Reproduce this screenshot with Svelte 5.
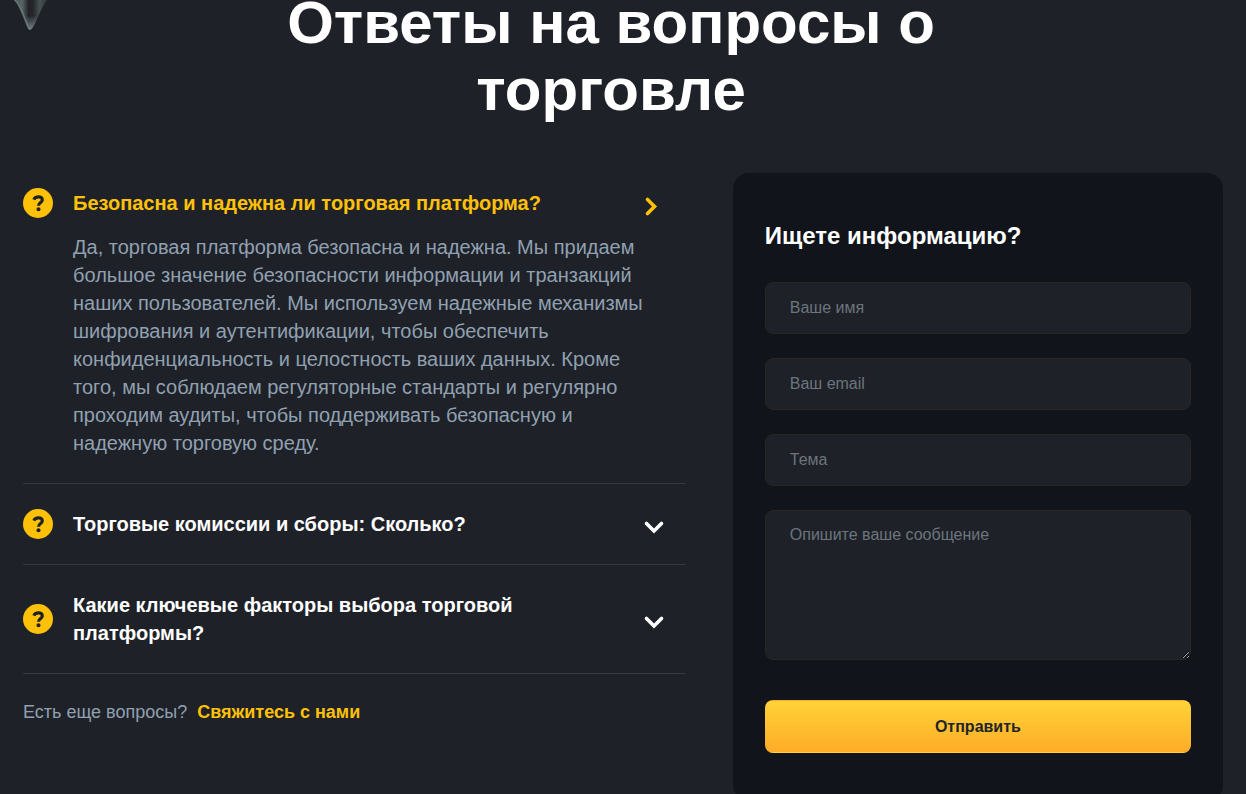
<script>
  let open = $state(0);

  const questions = [
    {
      title: 'Безопасна и надежна ли торговая платформа?',
      text: 'Да, торговая платформа безопасна и надежна. Мы придаем большое значение безопасности информации и транзакций наших пользователей. Мы используем надежные механизмы шифрования и аутентификации, чтобы обеспечить конфиденциальность и целостность ваших данных. Кроме того, мы соблюдаем регуляторные стандарты и регулярно проходим аудиты, чтобы поддерживать безопасную и надежную торговую среду.'
    },
    { title: 'Торговые комиссии и сборы: Сколько?' },
    { title: 'Какие ключевые факторы выбора торговой платформы?' }
  ];

  const toggle = (i) => (open = open === i ? -1 : i);
</script>

<section class="page">
  <svg class="ornament" viewBox="0 0 40 32" aria-hidden="true">
    <defs>
      <linearGradient id="metal" x1="0" x2="1">
        <stop offset="0" stop-color="#4d5b5c" />
        <stop offset="0.28" stop-color="#566263" />
        <stop offset="0.45" stop-color="#202327" />
        <stop offset="0.58" stop-color="#25292c" />
        <stop offset="0.75" stop-color="#465152" />
        <stop offset="1" stop-color="#2a3134" />
      </linearGradient>
      <linearGradient id="tip" x1="0" x2="0" y1="0" y2="1">
        <stop offset="0.55" stop-color="#829092" stop-opacity="0" />
        <stop offset="1" stop-color="#829092" stop-opacity="0.9" />
      </linearGradient>
      <filter id="soft"><feGaussianBlur stdDeviation="0.6" /></filter>
    </defs>
    <g filter="url(#soft)">
      <path d="M3 -2C10 4 13 15 17 24Q19 30 21 30Q24 29 28 19C32 10 35 3 40 -2Z" fill="url(#metal)" />
      <path d="M3 -2C10 4 13 15 17 24Q19 30 21 30Q24 29 28 19C32 10 35 3 40 -2Z" fill="url(#tip)" />
      <path d="M5 -1C12 5 15 16 19 26" fill="none" stroke="#7b898a" stroke-width="1.2" opacity="0.6" />
    </g>
  </svg>

  <h1>Ответы на вопросы о торговле</h1>

  <div class="columns">
    <div class="faq">
      {#each questions as q, i}
        <article class="item" class:active={open === i}>
          <button class="question" type="button" aria-expanded={open === i} onclick={() => toggle(i)}>
            <svg class="mark" viewBox="0 0 30 30" aria-hidden="true">
              <circle cx="15" cy="15" r="15" fill="#ffc107" />
              <path d="M10.800 11.700C11.600 9.800 13.200 8.900 15.300 8.900C17.700 8.900 19.300 10.100 19.300 11.900C19.300 14.500 15.500 14.400 15.500 17.700" fill="none" stroke="#1e2128" stroke-width="3.100" />
              <circle cx="15.500" cy="21.300" r="2" fill="#1e2128" />
            </svg>
            <span class="title">{q.title}</span>
            <svg class="arrow" viewBox="0 0 24 24" aria-hidden="true">
              {#if open === i}
                <path d="M6.500 8.500L13.500 15.500L6.500 22.500" />
              {:else}
                <path d="M5.500 11.500L13 19L20.500 11.500" />
              {/if}
            </svg>
          </button>
          {#if open === i && q.text}
            <p class="answer">{q.text}</p>
          {/if}
        </article>
      {/each}
      <p class="more">Есть еще вопросы? <a href="#contact">Свяжитесь с нами</a></p>
    </div>

    <form class="card" id="contact" onsubmit={(e) => e.preventDefault()}>
      <h2>Ищете информацию?</h2>
      <input type="text" name="name" placeholder="Ваше имя" aria-label="Ваше имя" />
      <input type="email" name="email" placeholder="Ваш email" aria-label="Ваш email" />
      <input type="text" name="subject" placeholder="Тема" aria-label="Тема" />
      <textarea name="message" placeholder="Опишите ваше сообщение" aria-label="Опишите ваше сообщение"></textarea>
      <button class="send" type="submit">Отправить</button>
    </form>
  </div>
</section>

<style>
  :global(body) {
    background: #1e2128;
  }

  .page {
    position: relative;
    display: flow-root;
    box-sizing: border-box;
    max-width: 1246px;
    margin: 0 auto;
    padding: 0 23px;
    color: #fff;
    font-family: Arial, "Liberation Sans", sans-serif;
  }

  .ornament {
    position: absolute;
    top: 0;
    left: 9px;
    width: 40px;
    height: 32px;
  }

  h1 {
    max-width: 720px;
    margin: -11px auto 50px;
    padding-right: 24px;
    font-size: 60px;
    line-height: 67px;
    text-align: center;
  }

  .columns {
    display: grid;
    grid-template-columns: minmax(0, 1.35fr) minmax(0, 1fr);
    gap: 48px;
    align-items: start;
  }

  .item {
    padding: 26px 20px 26px 0;
    border-bottom: 1px solid #363941;
  }

  .item:first-child {
    padding-top: 16px;
  }

  .question {
    display: flex;
    align-items: center;
    gap: 20px;
    width: 100%;
    padding: 0;
    border: 0;
    background: none;
    color: #fff;
    font: bold 20px/28px Arial, "Liberation Sans", sans-serif;
    text-align: left;
    cursor: pointer;
  }

  .active .question {
    color: #ffc107;
  }

  .mark {
    flex: none;
    width: 30px;
    height: 30px;
    margin: -1px 0;
  }

  .title {
    flex: 1;
  }

  .arrow {
    flex: none;
    width: 24px;
    height: 24px;
    overflow: visible;
    fill: none;
    stroke: currentColor;
    stroke-width: 3.6;
    stroke-linecap: round;
  }

  .answer {
    margin: 16px 0 0 50px;
    color: #90a0b0;
    font-size: 20px;
    line-height: 28px;
  }

  .more {
    margin: 24px 0 0;
    color: #90a0b0;
    font-size: 18px;
    line-height: 28px;
  }

  .more a {
    margin-left: 5px;
    color: #ffc107;
    font-weight: bold;
    text-decoration: none;
  }

  .card {
    display: flex;
    flex-direction: column;
    gap: 24px;
    padding: 48px 32px;
    border-radius: 16px;
    background: #11141b;
  }

  h2 {
    margin: 0 0 8px;
    font-size: 24px;
    line-height: 29px;
  }

  input,
  textarea {
    box-sizing: border-box;
    width: 100%;
    padding: 12px 24px;
    border: 1px solid #29261f;
    border-radius: 8px;
    background: #1e2128;
    color: #fff;
    font: 16px/24px Arial, "Liberation Sans", sans-serif;
  }

  input {
    height: 52px;
  }

  textarea {
    height: 150px;
    resize: vertical;
  }

  input::placeholder,
  textarea::placeholder {
    color: #6c757d;
    opacity: 1;
  }

  .send {
    height: 53px;
    margin-top: 16px;
    border: 1px solid transparent;
    border-radius: 8px;
    background: linear-gradient(#ffd338, #ffac27);
    color: #212529;
    font: bold 16px/24px Arial, "Liberation Sans", sans-serif;
    cursor: pointer;
  }
</style>
